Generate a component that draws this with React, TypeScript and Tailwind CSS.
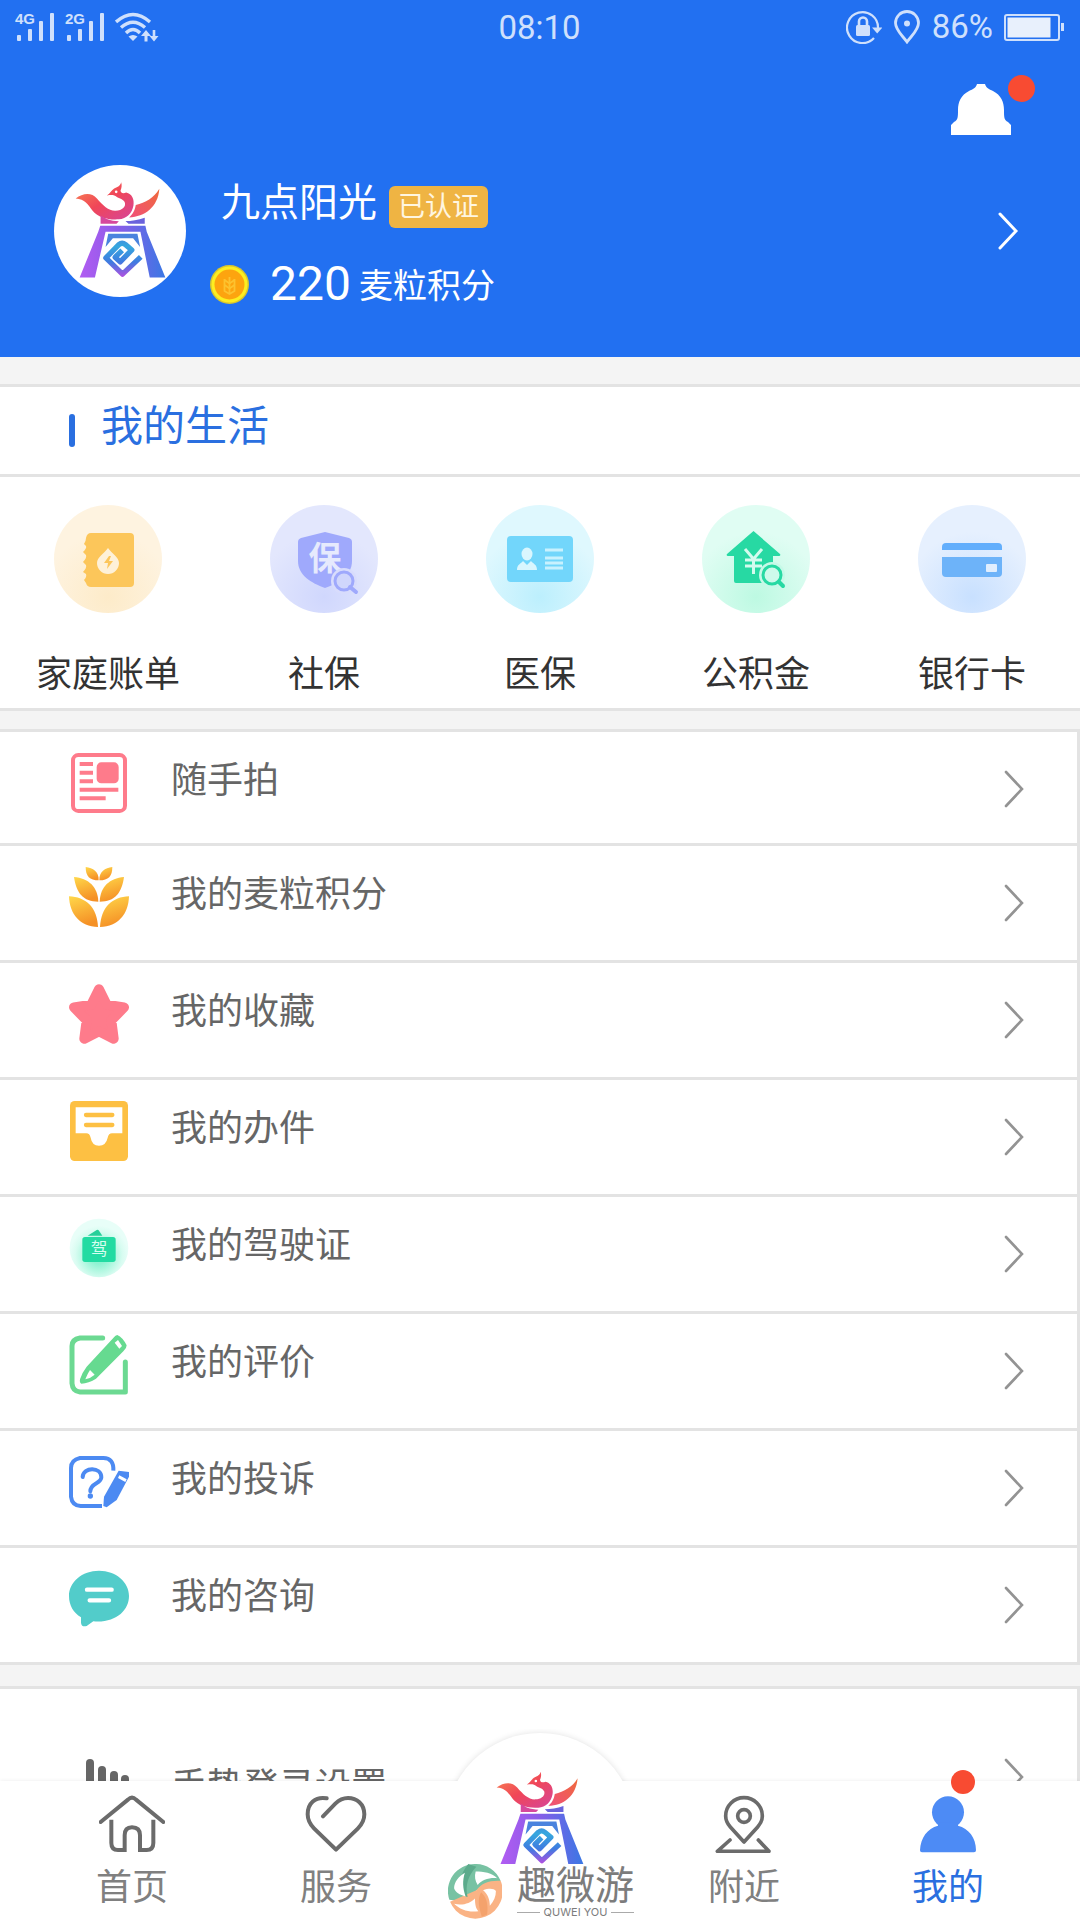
import type { ReactNode } from "react";

const GateLogo = ({ id, className }: { id: string; className?: string }) => (
  <svg viewBox="136 94 274 294" className={className} aria-hidden="true">
    <defs>
      <linearGradient id={`${id}-bird`} x1="0" y1="0" x2="1" y2="1">
        <stop offset="0" stopColor="#f98a52" />
        <stop offset="0.5" stopColor="#f04658" />
        <stop offset="1" stopColor="#d6459a" />
      </linearGradient>
      <linearGradient id={`${id}-wing`} x1="1" y1="0" x2="0" y2="1">
        <stop offset="0" stopColor="#ef6a3a" />
        <stop offset="1" stopColor="#f0507a" />
      </linearGradient>
      <linearGradient id={`${id}-gate`} x1="0" y1="0" x2="1" y2="0">
        <stop offset="0" stopColor="#b25cf2" />
        <stop offset="0.45" stopColor="#8a5ce8" />
        <stop offset="1" stopColor="#3a78e4" />
      </linearGradient>
      <linearGradient
        id={`${id}-knot`}
        x1="280"
        y1="250"
        x2="280"
        y2="384"
        gradientUnits="userSpaceOnUse"
      >
        <stop offset="0" stopColor="#4a7be0" />
        <stop offset="0.3" stopColor="#36a8de" />
        <stop offset="0.65" stopColor="#3f7be0" />
        <stop offset="1" stopColor="#b44fe0" />
      </linearGradient>
    </defs>
    <path
      d="M138 146C160 129 186 127 202 146C220 167 238 184 258 183C279 182 290 170 286 158C282 148 270 147 261 141C255 136 248 134 232 137C242 130 246 122 254 116C262 111 272 110 275 97C278 107 276 115 273 122C274 130 281 132 290 128C308 132 315 149 312 167C308 191 291 207 268 209C235 211 207 204 189 183C175 164 166 148 138 146Z"
      fill={`url(#${id}-bird)`}
    />
    <circle cx="260" cy="126" r="4" fill="#fff" />
    <path
      d="M390 117C374 145 348 158 319 166C316 184 309 194 299 203C346 202 386 172 390 117Z"
      fill={`url(#${id}-wing)`}
    />
    <path d="M213 197L232 208C245 213 256 214 268 215L261 222H213Z" fill="#d6489c" />
    <path d="M346 204C326 211 306 214 288 214L297 222H346Z" fill="#6a62dc" />
    <path
      d="M212 228H348L352 246L408 384H361L333 246H228L196 384H150L206 246Z"
      fill={`url(#${id}-gate)`}
    />
    <path d="M236 252H324L332 292L311 266H250L228 292Z" fill="#4a83de" />
    <path
      d="M334 322L279 374L229 325L268 285Q278 277 288 285L307 301L272 337L257 323L278 302"
      fill="none"
      stroke={`url(#${id}-knot)`}
      strokeWidth="16"
      strokeLinejoin="round"
    />
  </svg>
);

const Chevron = ({ className, width }: { className?: string; width: number }) => (
  <svg
    viewBox="0 0 20 38"
    fill="none"
    stroke="currentColor"
    strokeWidth={width}
    strokeLinecap="round"
    className={`w-5 h-[38px] shrink-0 ${className ?? ""}`}
    aria-hidden="true"
  >
    <path d="M2 2L18 19L2 36" />
  </svg>
);

const SignalBars = ({ label }: { label: string }) => (
  <svg viewBox="0 -4 42 38" className="w-[42px] h-[38px]" fill="currentColor">
    <text x="0" y="12" fontSize="15" fontWeight="700" fontFamily="Liberation Sans, sans-serif">
      {label}
    </text>
    <rect x="2" y="23" width="4" height="6" rx="1" />
    <rect x="13" y="17" width="4" height="12" rx="1" />
    <rect x="24" y="9" width="4" height="20" rx="1" />
    <rect x="35" y="1" width="4" height="28" rx="1" />
  </svg>
);

const StatusBar = () => (
  <div className="grid grid-cols-3 items-center h-[54px] pl-[15px] pr-4 text-[#cfe0fc] font-[Roboto,sans-serif] text-[33px] leading-[52px]">
    <div className="flex items-center gap-2">
      <SignalBars label="4G" />
      <SignalBars label="2G" />
      <svg viewBox="0 0 46 30" className="w-[46px] h-[30px]" fill="none" stroke="currentColor">
        <g strokeWidth="3.4">
          <path d="M1 10Q18 -5 35 10" />
          <path d="M6 15.5Q18 5 30 15.5" />
          <path d="M11 21Q18 14 25 21" />
        </g>
        <path d="M13.5 24.5Q18 21.5 22.5 24.5L18 29Z" fill="currentColor" stroke="none" />
        <g fill="currentColor" stroke="none">
          <path d="M31 18L36 24H32.5V29.5H29.5V24H26Z" />
          <path d="M39 29.5L34.5 24H37.7V18H40.3V24H43.5Z" />
        </g>
      </svg>
    </div>
    <div className="pt-[2px] text-center">08:10</div>
    <div className="flex items-center justify-end gap-[11px]">
      <svg viewBox="0 0 36 34" className="w-9 h-[34px]" fill="none" stroke="currentColor">
        <path d="M32 18A15.5 15.5 0 1 0 28 28" strokeWidth="2.2" />
        <path d="M26 17.5H36.5L31.2 23.5Z" fill="currentColor" stroke="none" />
        <rect x="10" y="15" width="14" height="11" rx="1.5" fill="currentColor" stroke="none" />
        <path d="M13 15V11.5A4 4 0 0 1 21 11.5V15" strokeWidth="2.6" />
      </svg>
      <svg viewBox="0 0 28 34" className="w-7 h-[34px]" fill="none" stroke="currentColor">
        <path
          d="M14 32C9 25 2.5 20 2.5 13A11.5 11.5 0 0 1 25.5 13C25.5 20 19 25 14 32Z"
          strokeWidth="2.8"
        />
        <circle cx="14" cy="13.5" r="3" fill="currentColor" stroke="none" />
      </svg>
      <span>86%</span>
      <svg viewBox="0 0 60 28" className="w-[60px] h-7" fill="none" stroke="currentColor">
        <rect x="1" y="2" width="54" height="25" rx="2" strokeWidth="2" />
        <rect x="3.5" y="4.5" width="43" height="20" fill="#e8f0fc" stroke="none" />
        <rect x="57" y="10" width="3" height="8" fill="currentColor" stroke="none" />
      </svg>
    </div>
  </div>
);

const Coin = () => (
  <svg viewBox="0 0 39 39" className="size-[39px]" aria-hidden="true">
    <circle cx="19.5" cy="19.5" r="19.5" fill="#d9c62c" />
    <circle cx="19.5" cy="19.5" r="18" fill="#fdee21" />
    <circle cx="19.5" cy="19.5" r="15" fill="#fda40f" />
    <g fill="none" stroke="#fdc22f" strokeWidth="1.8">
      <path d="M19.5 12V29M14.5 14V26L19.5 29L24.5 26V14" />
      <path d="M14.5 15L19.5 18.5L24.5 15M14.5 20L19.5 23.5L24.5 20" />
    </g>
  </svg>
);

const Header = () => (
  <header className="bg-[#2270f1] text-white pb-12">
    <StatusBar />
    <div className="flex justify-end px-[69px] pt-[30px]">
      <button type="button" aria-label="消息" className="relative">
        <svg viewBox="0 0 60 51" className="w-[60px] h-[51px]" fill="#fff">
          <path d="M26 0H34C35 4 38 5 42 7C50 11 53 18 53 26C53 33 53 36 57 38L60 41V51H0V41L3 38C7 36 7 33 7 26C7 18 10 11 18 7C22 5 25 4 26 0Z" />
        </svg>
        <span className="absolute -top-[9px] -right-6 size-[27px] rounded-full bg-[#f84b32]" />
      </button>
    </div>
    <a href="#profile" className="flex items-center pl-[54px] pr-[62px] pt-[18px]">
      <span className="size-[132px] rounded-full bg-white flex justify-center pt-4 shrink-0">
        <GateLogo id="avatar" className="w-[91px] h-[98px]" />
      </span>
      <div className="flex-1 pl-6 pt-[25px]">
        <div className="flex items-center gap-3 pl-[11px]">
          <span className="text-[39px] leading-[50px]">九点阳光</span>
          <span className="mt-2 px-[9px] rounded-md bg-[#efb443] text-[#fff6e0] text-[27px] leading-[42px]">
            已认证
          </span>
        </div>
        <div className="flex items-center mt-[31px]">
          <Coin />
          <span className="pl-[21px] font-[Roboto,sans-serif] text-5xl leading-[50px]">220</span>
          <span className="pl-2 pt-1 text-[34px] leading-[46px]">麦粒积分</span>
        </div>
      </div>
      <Chevron width={3} />
    </a>
  </header>
);

// Tinted disc that sits behind each shortcut drawing
const Disc = ({
  id,
  from,
  to,
  children,
}: {
  id: string;
  from: string;
  to: string;
  children: ReactNode;
}) => (
  <svg viewBox="0 0 108 108" className="size-[108px]" aria-hidden="true">
    <defs>
      <radialGradient id={id} cx="0.5" cy="0.85" r="0.6">
        <stop offset="0" stopColor={to} />
        <stop offset="1" stopColor={from} />
      </radialGradient>
    </defs>
    <circle cx="54" cy="54" r="54" fill={`url(#${id})`} />
    {children}
  </svg>
);

const shortcuts = [
  {
    label: "家庭账单",
    icon: (
      <Disc id="bill" from="#fef3e0" to="#fdebc9">
        <path
          d="M37 28H76Q80 28 80 32V78Q80 82 76 82H37Q33 82 32 78L30 75Q33 72 32 69L29 67Q33 63 32 60L29 57Q33 53 32 50L29 47Q33 43 32 41L30 39Q32 36 32 33Q33 28 37 28Z"
          fill="#fcc65a"
        />
        <path d="M54 43C58 49 65 52 65 58A11 11 0 0 1 43 58C43 52 50 49 54 43Z" fill="#fef1d8" />
        <path d="M55 51L50 58H54L53 64L59 56H55L57 51Z" fill="#fcc65a" />
      </Disc>
    ),
  },
  {
    label: "社保",
    icon: (
      <Disc id="social" from="#e3e7fd" to="#d0d7fd">
        <path
          d="M55 27L79 33Q82 34 82 37V56C82 70 69 78 55 83C41 78 28 70 28 56V37Q28 34 31 33Z"
          fill="#9fa9fc"
        />
        <text
          x="55"
          y="65"
          textAnchor="middle"
          fontSize="33"
          fontWeight="700"
          fill="#e6eafd"
        >
          保
        </text>
        <circle cx="74" cy="76" r="13" fill="#d8dcfc" />
        <circle cx="74" cy="76" r="9" fill="#d0d6fc" stroke="#9fa9fc" strokeWidth="3" />
        <path d="M80 82L86 87" stroke="#9fa9fc" strokeWidth="4" strokeLinecap="round" />
      </Disc>
    ),
  },
  {
    label: "医保",
    icon: (
      <Disc id="medical" from="#dff8fe" to="#bceffd">
        <rect x="21" y="31" width="66" height="46" rx="4" fill="#72d6fb" />
        <ellipse cx="41" cy="49" rx="5.5" ry="6.5" fill="#d9f6fe" />
        <path d="M31 65C31 59 35 59 37 56L41 60L45 56C47 59 51 59 51 65Z" fill="#d9f6fe" />
        <path d="M59 45H77M59 53H77M59 58H77M59 63H77" stroke="#c8f1fe" strokeWidth="3" />
      </Disc>
    ),
  },
  {
    label: "公积金",
    icon: (
      <Disc id="fund" from="#e0fdf3" to="#bdf9e2">
        <path
          d="M51.5 26L78 49Q79 51 77 51H71V78H34Q32 78 32 76V51H26Q24 51 25 49Z"
          fill="#27d9a3"
        />
        <path
          d="M43 44L51.5 54L60 44M51.5 54V69M43 55H60M43 61H60"
          fill="none"
          stroke="#d4fbee"
          strokeWidth="3"
        />
        <circle cx="70" cy="70" r="13" fill="#c6f9e8" />
        <circle cx="70" cy="70" r="9" fill="#cdfaeb" stroke="#27d9a3" strokeWidth="3" />
        <path d="M77 77L81 81" stroke="#27d9a3" strokeWidth="4" strokeLinecap="round" />
      </Disc>
    ),
  },
  {
    label: "银行卡",
    icon: (
      <Disc id="card" from="#e6f0fe" to="#c8e0ff">
        <path d="M24 45V42Q24 38 28 38H80Q84 38 84 42V45Z" fill="#62aefc" />
        <path d="M24 52H84V68Q84 72 80 72H28Q24 72 24 68Z" fill="#6db3f9" />
        <rect x="68" y="59" width="11" height="8" rx="1" fill="#e0eefe" />
      </Disc>
    ),
  },
];

const MyLife = () => (
  <section className="bg-white border-y-[3px] border-[#e3e3e3]">
    <h2 className="flex items-center h-[90px] pl-[69px] border-b-[3px] border-[#e3e3e3] text-[#2a6fe0] text-[42px]">
      <span className="w-[6px] h-[33px] rounded-full bg-[#2a6fe0]" />
      <span className="pl-[26px] pb-2 leading-[60px]">我的生活</span>
    </h2>
    <div className="grid grid-cols-5 pt-7 pb-[6px]">
      {shortcuts.map((item) => (
        <button
          key={item.label}
          type="button"
          className="flex flex-col items-center text-[36px] leading-[54px] text-[#333]"
        >
          {item.icon}
          <span className="mt-[35px]">{item.label}</span>
        </button>
      ))}
    </div>
  </section>
);

const NewsIcon = () => (
  <svg viewBox="0 0 180 180" className="size-[60px]" fill="none" stroke="#fe7b8b">
    <rect x="12" y="6" width="156" height="168" rx="16" strokeWidth="12" />
    <path d="M32 33H72M32 59H72M32 85H72M32 110H148M32 136H110" strokeWidth="12" />
    <rect x="83" y="28" width="66" height="63" rx="14" fill="#fe7b8b" stroke="none" />
  </svg>
);

const WheatIcon = () => (
  <svg viewBox="0 0 180 180" className="size-[60px]">
    <defs>
      <linearGradient id="leaf" x1="0" y1="0" x2="0.3" y2="1">
        <stop offset="0" stopColor="#ffd84a" />
        <stop offset="1" stopColor="#f59126" />
      </linearGradient>
    </defs>
    <g fill="url(#leaf)">
      <path d="M50 0C72 2 90 14 89 40C62 40 50 28 50 0Z" />
      <path d="M130 0C108 2 90 14 91 40C118 40 130 28 130 0Z" />
      <path d="M15 30C58 34 86 58 88 104C42 104 22 78 15 30Z" />
      <path d="M165 30C122 34 94 58 92 104C138 104 158 78 165 30Z" />
      <path d="M0 88C50 90 84 120 87 180C32 178 2 142 0 88Z" />
      <path d="M180 88C130 90 96 120 93 180C148 178 178 142 180 88Z" />
    </g>
  </svg>
);

const StarIcon = () => (
  <svg viewBox="0 0 180 180" className="size-[60px]">
    <path
      d="M90 16L113 62L165 70L127 109L134 164L90 142L46 164L53 109L15 70L67 62Z"
      fill="#fe7b8b"
      stroke="#fe7b8b"
      strokeWidth="30"
      strokeLinejoin="round"
    />
  </svg>
);

const TrayIcon = () => (
  <svg viewBox="87 93 180 180" className="size-[60px]">
    <rect x="90" y="93" width="174" height="180" rx="14" fill="#fdc043" />
    <path
      d="M107 112H247V190H216Q206 190 203 203Q198 227 177 227Q156 227 152 203Q149 190 139 190H107Z"
      fill="#fff"
    />
    <path
      d="M138 135H217M138 165H217"
      stroke="#fdc043"
      strokeWidth="13"
      strokeLinecap="round"
    />
  </svg>
);

const LicenseIcon = () => (
  <svg viewBox="87 444 180 180" className="size-[60px]">
    <defs>
      <radialGradient id="license" cx="0.5" cy="0.62" r="0.5">
        <stop offset="0.3" stopColor="#8ff3d2" />
        <stop offset="0.8" stopColor="#d8fcf1" />
        <stop offset="1" stopColor="#e8fef8" />
      </radialGradient>
    </defs>
    <circle cx="177" cy="534" r="88" fill="url(#license)" />
    <path d="M143 497L170 480Q174 478 177 482L187 497Z" fill="#25cf99" />
    <rect x="127" y="501" width="100" height="75" rx="8" fill="#22dba2" />
    <text x="177" y="556" textAnchor="middle" fontSize="50" fill="#d6fdef">
      驾
    </text>
  </svg>
);

const ReviewIcon = () => (
  <svg viewBox="87 105 180 180" className="size-[60px]" fill="none">
    <path
      d="M188 114H120Q96 118 96 138V250Q98 274 120 276H256V186"
      stroke="#6cd992"
      strokeWidth="15"
      strokeLinecap="round"
      strokeLinejoin="round"
    />
    <path
      d="M232 105Q248 112 260 136Q260 146 250 154L168 236Q146 250 124 251Q118 248 120 238Q126 218 140 200L222 112Q226 106 232 105Z"
      fill="#66da90"
    />
    <path d="M224 128L234 120L246 138L238 146Z" fill="#fff" />
    <path d="M150 210L164 224Q150 236 136 238Q142 222 150 210Z" fill="#fff" />
  </svg>
);

const ComplaintIcon = () => (
  <svg viewBox="87 456 180 180" className="size-[60px]" fill="none" stroke="#4c8af2">
    <path
      d="M220 512Q222 474 190 474H120Q93 480 93 504V590Q96 616 122 618H186"
      strokeWidth="12"
    />
    <path
      d="M128 531C130 500 184 500 184 532C184 552 151 548 151 574"
      strokeWidth="12"
      strokeLinecap="round"
    />
    <circle cx="151" cy="588" r="8" fill="#4c8af2" stroke="none" />
    <path
      d="M236 512L267 516V530L230 600L200 622L190 618L192 590Z"
      fill="#4c8af2"
      stroke="none"
    />
    <path d="M238 526L260 538L256 546L234 534Z" fill="#fff" stroke="none" />
  </svg>
);

const ConsultIcon = () => (
  <svg viewBox="87 807 180 180" className="size-[60px]">
    <path
      d="M177 812C228 812 267 846 267 888C267 932 226 970 160 964L140 978Q124 982 123 968V952C100 938 87 916 87 888C87 846 126 812 177 812Z"
      fill="#52ccca"
    />
    <path d="M141 869H215M149 901H207" stroke="#fff" strokeWidth="13" strokeLinecap="round" />
  </svg>
);

const GestureIcon = () => (
  <svg viewBox="0 0 60 60" className="size-[60px]" fill="#666">
    <rect x="17" y="0" width="8" height="60" rx="4" />
    <rect x="29" y="7" width="8" height="53" rx="4" />
    <rect x="41" y="12" width="8" height="48" rx="4" />
    <rect x="52" y="16" width="8" height="44" rx="4" />
  </svg>
);

const menuItems = [
  { label: "随手拍", icon: <NewsIcon /> },
  { label: "我的麦粒积分", icon: <WheatIcon /> },
  { label: "我的收藏", icon: <StarIcon /> },
  { label: "我的办件", icon: <TrayIcon /> },
  { label: "我的驾驶证", icon: <LicenseIcon /> },
  { label: "我的评价", icon: <ReviewIcon /> },
  { label: "我的投诉", icon: <ComplaintIcon /> },
  { label: "我的咨询", icon: <ConsultIcon /> },
];

const MenuRow = ({
  label,
  icon,
  arrowClass = "mt-3",
}: {
  label: string;
  icon: ReactNode;
  arrowClass?: string;
}) => (
  <a href="#menu" className="flex items-center pl-[69px] pr-[53px] text-[36px] text-[#666]">
    {icon}
    <span className="flex-1 pl-[42px] pb-1 leading-[56px]">{label}</span>
    <Chevron width={2.6} className={`text-[#939393] ${arrowClass}`} />
  </a>
);

const Menu = () => (
  <ul className="mt-[18px] bg-white border-t-[3px] border-r-[3px] border-[#e3e3e3]">
    {menuItems.map((item) => (
      <li
        key={item.label}
        className="pt-[21px] pb-[33px] first:pb-[30px] border-b-[3px] border-[#e3e3e3]"
      >
        <MenuRow {...item} />
      </li>
    ))}
  </ul>
);

const Settings = () => (
  <ul className="mt-[21px] bg-white border-y-[3px] border-r-[3px] border-[#e3e3e3]">
    <li className="pt-[69px] pb-[45px]">
      <MenuRow label="手势登录设置" icon={<GestureIcon />} arrowClass="mb-6" />
    </li>
  </ul>
);

const tabs = [
  {
    label: "首页",
    icon: (
      <svg
        viewBox="297 376 198 174"
        className="w-[66px] h-[58px]"
        fill="none"
        stroke="#6b6b6b"
        strokeWidth="12"
      >
        <path
          d="M302 457L384 390Q396 378 408 390L490 457"
          strokeLinecap="round"
          strokeLinejoin="round"
        />
        <path d="M334 450V520Q334 541 354 541H374V497Q374 473 396 473Q420 473 420 497V541H440Q460 541 460 520V450" />
      </svg>
    ),
  },
  {
    label: "服务",
    icon: (
      <svg
        viewBox="909 376 198 174"
        className="w-[66px] h-[58px]"
        fill="none"
        stroke="#6b6b6b"
        strokeWidth="12"
        strokeLinecap="round"
        strokeLinejoin="round"
      >
        <path d="M980 386C945 380 923 402 923 434C923 452 930 464 942 476L1008 540L1074 476C1086 464 1093 452 1093 434C1093 402 1070 385 1044 385C1028 385 1016 392 1006 402L969 440" />
      </svg>
    ),
  },
  { label: "", icon: null },
  {
    label: "附近",
    icon: (
      <svg
        viewBox="153 406 198 174"
        className="w-[66px] h-[58px]"
        fill="none"
        stroke="#6b6b6b"
        strokeWidth="11"
        strokeLinecap="round"
        strokeLinejoin="round"
      >
        <path d="M252 547L211 502C202 492 197 482 197 469A55 55 0 0 1 307 469C307 482 302 492 293 502Z" />
        <circle cx="252" cy="469" r="19" />
        <path d="M210 541L172 575H327L295 541" />
      </svg>
    ),
  },
  {
    label: "我的",
    icon: (
      <svg viewBox="765 408 198 174" className="w-[66px] h-[58px]" fill="#4d8bf5">
        <circle cx="864" cy="460" r="48" />
        <path d="M834 490H894V500C926 508 948 536 948 574Q948 580 942 580H786Q780 580 780 574C782 536 802 508 834 500Z" />
      </svg>
    ),
  },
];

const Watermark = () => (
  <div className="absolute left-[448px] bottom-0 flex items-start gap-[15px] text-[#7c7c7c] pointer-events-none">
    <svg viewBox="0 0 160 166" className="w-[54px] h-14">
      {/* filled disc with white lens shapes cut between the two ribbons */}
      <path d="M80 0A80 80 0 0 0 4 106C40 112 76 104 84 78L156 50A80 80 0 0 0 80 0Z" fill="#78c2a3" />
      <path d="M156 50A80 80 0 0 1 6 112L84 78C100 56 124 48 156 50Z" fill="#fab385" />
      <path d="M60 0C36 30 30 58 38 92L58 98C50 62 60 34 84 8Z" fill="#5cab8c" />
      <path d="M82 22C104 22 132 26 146 42C120 40 100 48 88 62C80 50 78 36 82 22Z" fill="#fff" />
      <path d="M50 26C42 50 44 72 52 96C34 92 22 84 18 72C18 54 32 36 50 26Z" fill="#fff" />
      <path d="M18 118C44 124 66 116 80 102C80 120 82 130 90 140C62 144 36 136 18 118Z" fill="#fff" />
      <path d="M104 78C120 72 136 72 142 80C142 96 136 110 124 124C124 106 118 90 104 78Z" fill="#fff" />
      <path d="M98 84C112 96 120 116 116 150L100 156C92 130 86 106 98 84Z" fill="#f4a26c" />
    </svg>
    <div className="flex flex-col items-center pt-[2px]">
      <span className="text-[39px] leading-[40px]">趣微游</span>
      <span className="flex items-center gap-1 self-stretch font-[Inter,sans-serif] text-[11px] leading-[12px]">
        <span className="flex-1 h-px bg-[#aaa]" />
        QUWEI YOU
        <span className="flex-1 h-px bg-[#aaa]" />
      </span>
    </div>
  </div>
);

const TabBar = () => (
  <nav className="relative bg-white grid grid-cols-5 px-[30px] shadow-[0_0_4px_rgba(0,0,0,0.08)]">
    {tabs.map((tab) =>
      tab.icon ? (
        <a
          key={tab.label}
          href="#tab"
          className={`relative flex flex-col items-center pt-[14px] pb-[5px] text-[36px] leading-[54px] ${
            tab.label === "我的" ? "text-[#2a6fe0]" : "text-[#808080]"
          }`}
        >
          {tab.icon}
          <span className="mt-2">{tab.label}</span>
          {tab.label === "我的" && (
            <span className="absolute -top-[11px] left-1/2 ml-[3px] size-6 rounded-full bg-[#f84b32]" />
          )}
        </a>
      ) : (
        <a key="center" href="#tab" aria-label="九点" className="relative flex justify-center">
          {/* raised round bump, only its top shows over the bar */}
          <span className="absolute -top-[52px] h-[52px] w-52 overflow-hidden flex justify-center">
            <span className="mt-1 size-[190px] shrink-0 rounded-full bg-white shadow-[0_0_6px_rgba(0,0,0,0.12)]" />
          </span>
          <GateLogo id="tab" className="absolute -top-[11px] w-[88px] h-[96px]" />
        </a>
      ),
    )}
    <Watermark />
  </nav>
);

export default function App() {
  return (
    <div className="flex flex-col h-screen bg-[#f4f4f4] font-[Roboto,'Noto_Sans_CJK_SC',sans-serif]">
      <main className="flex-1 min-h-0 overflow-y-auto [scrollbar-width:none]">
        <Header />
        <div className="pt-[27px]">
          <MyLife />
          <Menu />
          <Settings />
        </div>
      </main>
      <TabBar />
    </div>
  );
}
